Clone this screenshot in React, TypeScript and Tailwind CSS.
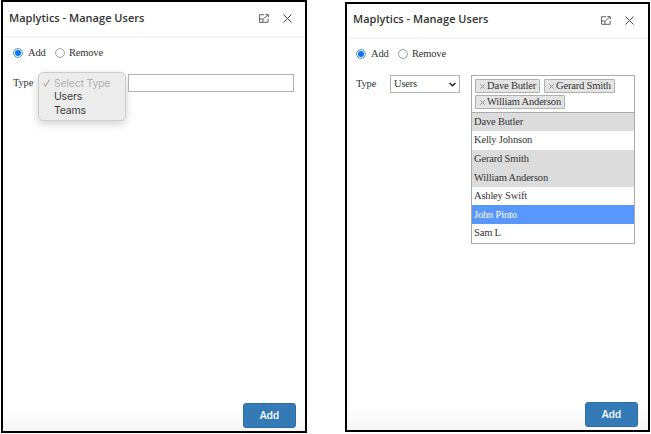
import type { ReactNode } from "react";

const users = [
  { name: "Dave Butler", state: "picked" },
  { name: "Kelly Johnson", state: "idle" },
  { name: "Gerard Smith", state: "picked" },
  { name: "William Anderson", state: "picked" },
  { name: "Ashley Swift", state: "idle" },
  { name: "John Pinto", state: "active" },
  { name: "Sam L", state: "idle" },
];

const rowStyles: Record<string, string> = {
  picked: "bg-[#dcdcdc] text-[#333]",
  idle: "bg-white text-[#333]",
  active: "bg-[#5897fb] text-white",
};

function ExpandIcon() {
  return (
    <svg width="10" height="9" viewBox="0 0 10 9" fill="none" stroke="#505050" strokeWidth="0.9">
      <path d="M5 0.7H0.6V8.3H9.1V4.8" />
      <path d="M0.6 5H3.9V8.3M4.2 5L9 0.8M6.4 0.6H9.3V3.4" />
    </svg>
  );
}

function CloseIcon() {
  return (
    <svg width="9" height="9" viewBox="0 0 9 9" fill="none" stroke="#404040" strokeWidth="0.95">
      <path d="M0.5 0.5L8.5 8.5M8.5 0.5L0.5 8.5" />
    </svg>
  );
}

function Radio({ checked = false }: { checked?: boolean }) {
  return (
    <svg width="10" height="10" viewBox="0 0 10 10">
      <circle cx="5" cy="5" r="4.4" fill="#fff" stroke={checked ? "#1677f2" : "#858585"} strokeWidth="0.8" />
      {checked && <circle cx="5" cy="5" r="3" fill="#0b73f5" />}
    </svg>
  );
}

interface PanelProps {
  children: ReactNode;
  className: string;
  headerClass: string;
  modeClass: string;
  footerClass: string;
}

function Panel({ children, className, headerClass, modeClass, footerClass }: PanelProps) {
  return (
    <section className={`flex shrink-0 flex-col border-2 border-black bg-white ${className}`}>
      <header className={`flex shrink-0 items-center border-b-2 border-[#f4f4f4] ${headerClass}`}>
        <h1 className="flex-1 whitespace-nowrap pb-[2px] font-['Open_Sans','Noto_Sans',sans-serif] text-[11px] leading-4 font-semibold tracking-[0.02px] text-[#333]">
          Maplytics - Manage Users
        </h1>
        <div className="flex items-center gap-[14px]">
          <ExpandIcon />
          <CloseIcon />
        </div>
      </header>
      <div className={`flex shrink-0 items-center text-[#333] ${modeClass}`}>
        <Radio checked />
        <span className="w-[32px] pl-[5px]">Add</span>
        <Radio />
        <span className="pl-[4px]">Remove</span>
      </div>
      {children}
      <footer className={`mt-auto flex h-[50px] shrink-0 items-end justify-end bg-linear-to-b from-white from-50% to-[#f6f6f6] ${footerClass}`}>
        <button className="h-[25px] w-[53px] rounded-[3px] border border-[#2e6da4] bg-[#337ab7] font-['Open_Sans','Noto_Sans',sans-serif] text-[10.5px] leading-none font-semibold tracking-[-0.2px] text-white">
          Add
        </button>
      </footer>
    </section>
  );
}

function Chip({ name }: { name: string }) {
  return (
    <span className="flex h-[14px] items-center rounded-[1px] border border-[#b0b0b0] bg-[#e4e4e4] pr-[3px] pl-[4px] whitespace-nowrap text-[#333]">
      <svg className="mr-[2px]" width="5" height="5" viewBox="0 0 5 5" stroke="#888" strokeWidth="0.9">
        <path d="M0.3 0.3L4.7 4.7M4.7 0.3L0.3 4.7" />
      </svg>
      {name}
    </span>
  );
}

export default function App() {
  return (
    <main className="flex h-[434px] w-[651px] items-start overflow-hidden bg-white pl-px font-['Liberation_Serif',serif] text-[10.5px] leading-3 tracking-[-0.18px]">
      <Panel
        className="h-[433px] w-[306px]"
        headerClass="h-9 pb-px pr-[13px] pl-[6px]"
        modeClass="h-[30px] pl-[10px]"
        footerClass="pr-[9px] pb-[3px]"
      >
        <div className="flex pt-[4px] pl-[10px] text-[#333]">
          <span className="w-[25px] pt-[5px]">Type</span>
          <div className="h-[49px] w-[88px] rounded-[5px] border border-[#cdcdcd] bg-[#ececec] pt-[3.5px] font-['Inter','Liberation_Sans',sans-serif] text-[10.5px] leading-[13.7px] tracking-[-0.2px] shadow-[0_3px_8px_rgba(0,0,0,0.18)]">
            <div className="flex items-center text-[#b1b1b1]">
              <svg className="mr-[4px] ml-[4px]" width="7" height="8" viewBox="0 0 7 8" fill="none" stroke="#a8a8a8" strokeWidth="1.1">
                <path d="M0.6 4.5L2.5 7L6.4 0.8" />
              </svg>
              <span className="whitespace-nowrap">Select Type</span>
            </div>
            <div className="pl-[15px] text-[#3c3c3c]">Users</div>
            <div className="pl-[15px] text-[#3c3c3c]">Teams</div>
          </div>
          <div className="mt-[2px] ml-[2px] h-[18px] w-[166px] border border-[#b2b2b2] bg-white" />
        </div>
      </Panel>
      <Panel
        className="mt-[2px] ml-[38px] h-[430px] w-[305px]"
        headerClass="h-[35px] pb-px pr-[14px] pl-[6px]"
        modeClass="h-[30px] pl-[9px]"
        footerClass="pr-[10px] pb-[3px]"
      >
        <div className="flex pt-[6px] pl-[9px] text-[#333]">
          <span className="w-[34px] pt-[3px]">Type</span>
          <div className="flex h-[18px] w-[70px] items-center justify-between border border-[#b2b2b2] bg-white pr-[3px] pl-[3px]">
            <span>Users</span>
            <svg width="7" height="5" viewBox="0 0 7 5" fill="none" stroke="#222" strokeWidth="1.5">
              <path d="M0.6 1L3.5 3.8L6.4 1" />
            </svg>
          </div>
          <div className="ml-[11px] w-[164px] border border-[#aaa]">
            <div className="flex h-[36.5px] flex-wrap content-start gap-x-[4px] gap-y-[2px] border-b border-[#aaa] pt-[3px] pl-[3px]">
              <Chip name="Dave Butler" />
              <Chip name="Gerard Smith" />
              <Chip name="William Anderson" />
            </div>
            <ul>
              {users.map((user) => (
                <li key={user.name} className={`flex h-[18.6px] items-center pl-[2px] ${rowStyles[user.state]}`}>
                  {user.name}
                </li>
              ))}
            </ul>
          </div>
        </div>
      </Panel>
    </main>
  );
}
